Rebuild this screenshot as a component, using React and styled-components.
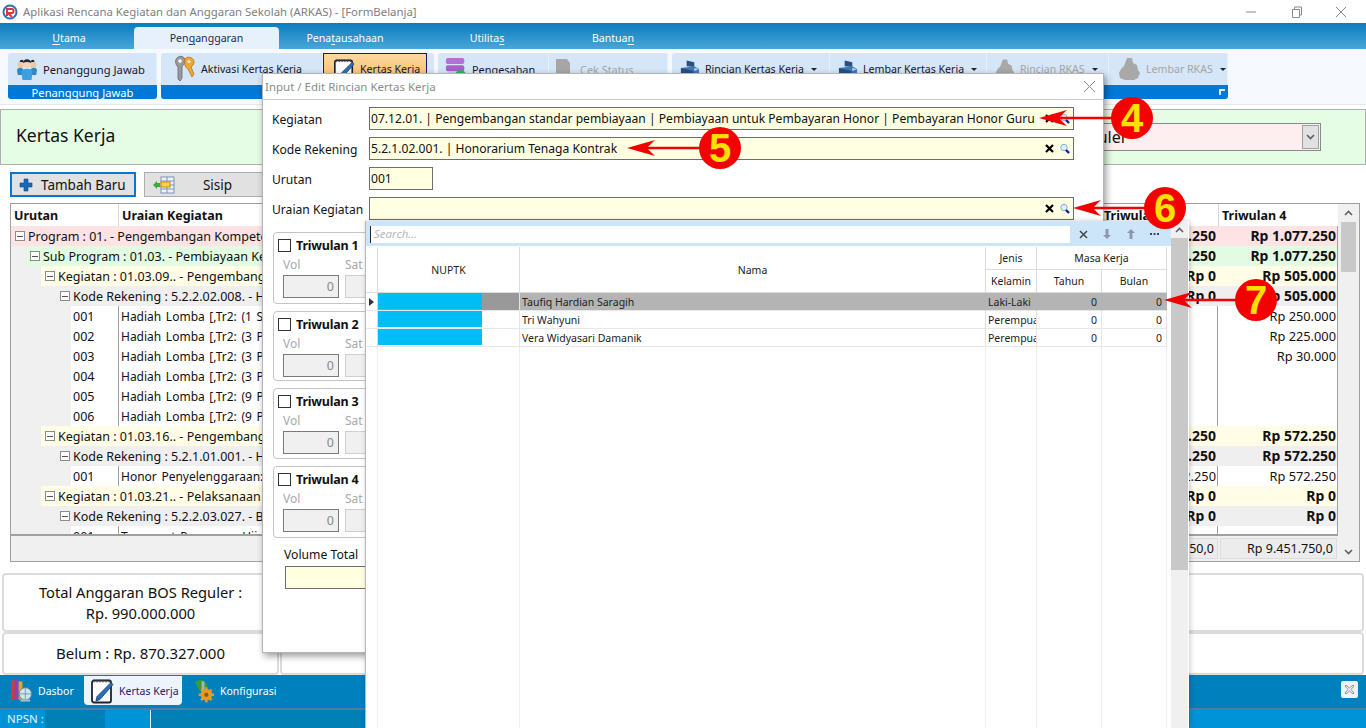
import React from 'react';
import styled, {createGlobalStyle} from "styled-components";

const UI_FONT = `"Noto Sans", "Open Sans", sans-serif`;

const Global = createGlobalStyle`
  html, body {
    margin: 0;
    padding: 0;
    background: #fff;
  }
  * {
    box-sizing: border-box;
  }
`

const Page = styled.div`
  position: relative;
  width: 1366px;
  height: 728px;
  overflow: hidden;
  display: flex;
  flex-direction: column;
  background: #fff;
  font-family: ${UI_FONT};
  font-size: 12.5px;
  color: #111;
`

/* title bar */
const TitleBar = styled.div`
  height: 23px;
  flex: none;
  display: flex;
  align-items: center;
  padding-left: 2px;
  gap: 5px;
  color: #808080;
  font-size: 11.4px;
`
const TitleText = styled.span`
  flex: 1;
`
const WinControls = styled.div`
  display: flex;
  align-items: center;
  gap: 31px;
  padding-right: 18px;
`

/* ribbon */
const TabStrip = styled.div`
  height: 26px;
  flex: none;
  display: flex;
  align-items: flex-end;
  background: linear-gradient(#0a7dbd, #4aa6d8);
  color: #fff;
  font-size: 10.6px;
`
const RibbonTab = styled.div`
  width: ${({$w}) => $w}px;
  height: 22px;
  display: flex;
  align-items: center;
  justify-content: center;
  padding-left: ${({$pl}) => $pl || 0}px;
  border-radius: 4px 4px 0 0;
  background: ${({$active}) => $active ? '#e7f1fb' : 'transparent'};
  color: ${({$active}) => $active ? '#1b2a5a' : '#fff'};
  u {
    text-underline-offset: 2px;
  }
`
const RibbonBody = styled.div`
  height: 56px;
  flex: none;
  display: flex;
  gap: 4px;
  padding: 4px 0 5px 8px;
  background: #f6fafe;
  border-bottom: 1px solid #e8e8e8;
`
const RibbonGroup = styled.div`
  width: ${({$w}) => $w}px;
  display: flex;
  flex-direction: column;
  background: #d6e6f9;
  border-radius: 3px;
  overflow: hidden;
`
const GroupItems = styled.div`
  flex: 1;
  display: flex;
  align-items: center;
`
const GroupLabel = styled.div`
  height: 14px;
  flex: none;
  display: flex;
  align-items: center;
  justify-content: center;
  position: relative;
  background: #0078d7;
  color: #fff;
  font-size: 11.2px;
`
const Launcher = styled.span`
  position: absolute;
  right: 3px;
  top: 4px;
  width: 6px;
  height: 6px;
  border-left: 2px solid #dbe9f7;
  border-top: 2px solid #dbe9f7;
`
const RibbonItem = styled.div`
  width: ${({$w}) => $w}px;
  height: 100%;
  flex: none;
  display: flex;
  align-items: center;
  gap: 5px;
  padding-left: ${({$pad}) => $pad}px;
  font-size: ${({$fs}) => $fs || 10.6}px;
  white-space: nowrap;
  color: ${({$off}) => $off ? '#a5a5a5' : '#15152c'};
  background: ${({$active}) => $active ? 'linear-gradient(#fcd9a0, #f9b860)' : 'transparent'};
  border: ${({$active}) => $active ? '1px solid #101e66' : 'none'};
  border-right: ${({$active}) => $active ? '1px solid #101e66' : '1px solid #e6f0fb'};
  svg {
    flex: none;
  }
`
const Caret = styled.span`
  width: 0;
  height: 0;
  margin-left: 2px;
  border-left: 3px solid transparent;
  border-right: 3px solid transparent;
  border-top: 3px solid #222;
`

/* page heading */
const HeadPanel = styled.div`
  height: 56px;
  flex: none;
  margin-top: 4px;
  display: flex;
  align-items: center;
  justify-content: space-between;
  padding: 0 44px 0 15px;
  background: #e4fde4;
  border: 1px solid #b0b0b0;
`
const HeadTitle = styled.div`
  margin-bottom: 4px;
  font-size: 17.5px;
`
const SelectBox = styled.div`
  width: 400px;
  height: 28px;
  display: flex;
  align-items: center;
  justify-content: space-between;
  padding: 0 1px 0 111px;
  background: #fdefef;
  border: 1px solid #8a8a8a;
  font-size: 16px;
`
const SelectArrow = styled.div`
  width: 17px;
  height: 24px;
  display: flex;
  align-items: center;
  justify-content: center;
  background: #e1e1e1;
  border: 1px solid #a0a0a0;
`

/* toolbar */
const ToolRow = styled.div`
  height: 25px;
  flex: none;
  margin-top: 7px;
  padding-left: 10px;
  display: flex;
  gap: 8px;
`
const ToolButton = styled.div`
  width: ${({$w}) => $w}px;
  display: flex;
  align-items: center;
  gap: ${({$primary}) => $primary ? 8 : 12}px;
  padding-left: 7px;
  background: #e1e1e1;
  border: ${({$primary}) => $primary ? '2px solid #0078d7' : '1px solid #adadad'};
  font-size: 13.5px;
`
const ToolLabel = styled.span`
  flex: 1;
  text-align: ${({$center}) => $center ? 'center' : 'left'};
  padding-right: ${({$center}) => $center ? '42px' : '0'};
`

/* tree grid */
const GridWrap = styled.div`
  height: 359px;
  flex: none;
  margin: 6px 6px 0 10px;
  display: flex;
  border: 1px solid #a0a0a0;
  background: #f0f0f0;
`
const GridMain = styled.div`
  width: 1327px;
  display: flex;
  flex-direction: column;
`
const GridHead = styled.div`
  height: 22px;
  flex: none;
  display: flex;
  background: #fff;
  font-weight: 700;
`
const HeadCell = styled.div`
  width: ${({$w}) => $w ? `${$w}px` : 'auto'};
  flex: ${({$w}) => $w ? 'none' : 1};
  padding-left: 3px;
  line-height: 23px;
  border-left: ${({$first}) => $first ? 'none' : '1px solid #d8d8d8'};
`
const GridBody = styled.div`
  flex: 1;
  overflow: hidden;
  border-right: 1px solid #a0a0a0;
`
const Row = styled.div`
  height: 20px;
  display: flex;
  align-items: center;
  margin-left: ${({$level}) => $level * 15}px;
  background: ${({$bg}) => $bg};
  font-weight: 400;
  white-space: nowrap;
`
const GroupTitle = styled.div`
  flex: 1;
  display: flex;
  align-items: center;
  gap: 3px;
  padding-left: 4px;
`
const Toggle = styled.span`
  width: 10px;
  height: 10px;
  flex: none;
  display: flex;
  align-items: center;
  justify-content: center;
  border: 1px solid #8c8c8c;
  background: #fff;
  &:after {
    content: "";
    width: 6px;
    height: 1px;
    background: #555;
  }
`
const DataNo = styled.div`
  width: 47px;
  padding-left: 2px;
  line-height: 21px;
`
const DataText = styled.div`
  flex: 1;
  height: 100%;
  line-height: 21px;
  padding-left: 2px;
  font-size: 12px;
  word-spacing: 1.5px;
  border-left: 1px solid #a0a0a0;
`
const Money = styled.div`
  width: ${({$w}) => $w}px;
  height: 100%;
  line-height: 20px;
  padding-right: 1px;
  text-align: right;
  font-size: ${({$bold}) => $bold ? 14 : 12.8}px;
  font-weight: ${({$bold}) => $bold ? 700 : 400};
  border-left: ${({$line}) => $line ? '1px solid #a0a0a0' : 'none'};
`
const GridFoot = styled.div`
  height: 27px;
  flex: none;
  display: flex;
  justify-content: flex-end;
  gap: 2px;
  padding: 2px 1px 2px 0;
  background: #f0f0f0;
  border-top: 2px solid #a0a0a0;
`
const FootCell = styled.div`
  width: ${({$w}) => $w}px;
  padding-right: 3px;
  text-align: right;
  line-height: 20px;
  background: #ececec;
  border: 1px solid #dcdcdc;
`
const ScrollTrack = styled.div`
  width: ${({$w}) => $w}px;
  flex: none;
  display: flex;
  flex-direction: column;
  align-items: center;
  background: #f0f0f0;
`
const ScrollArrow = styled.div`
  height: ${({$h}) => $h}px;
  flex: none;
  display: flex;
  align-items: center;
  justify-content: center;
`
const ScrollThumb = styled.div`
  width: ${({$w}) => $w}px;
  height: ${({$h}) => $h}px;
  flex: none;
  background: #c8c8c8;
`
const ScrollRest = styled.div`
  flex: 1;
`

/* totals */
const Summary = styled.div`
  height: 102px;
  flex: none;
  margin-top: 11px;
  display: grid;
  grid-template-columns: 277px 1fr;
  padding: 0 2px;
  gap: 1px;
`
const SummaryCol = styled.div`
  display: grid;
  grid-template-rows: 59px 1fr;
`
const SummaryBox = styled.div`
  display: flex;
  align-items: center;
  justify-content: center;
  text-align: center;
  border: 2px solid #dcdcdc;
  border-radius: 4px;
  font-size: 15px;
  line-height: 21px;
`
const TotalLine = styled.span`
  font-size: 14.7px;
`

/* bottom */
const BottomBar = styled.div`
  height: 33px;
  flex: none;
  display: flex;
  align-items: flex-start;
  padding: 1px 8px 0 6px;
  background: #0080bd;
  color: #fff;
  font-size: 10.5px;
`
const BottomTab = styled.div`
  height: 29px;
  width: ${({$w}) => $w}px;
  display: flex;
  align-items: center;
  gap: 5px;
  padding-left: ${({$pad}) => $pad}px;
  white-space: nowrap;
  border-radius: 0 0 4px 4px;
  background: ${({$active}) => $active ? '#eef4fb' : 'transparent'};
  color: ${({$active}) => $active ? '#2a1a6a' : '#fff'};
  svg {
    flex: none;
  }
`
const BottomClose = styled.div`
  margin: 5px 0 0 auto;
  width: 17px;
  height: 17px;
  display: flex;
  align-items: center;
  justify-content: center;
  background: #eef4f8;
  border-radius: 2px;
`
const StatusBar = styled.div`
  height: 20px;
  flex: none;
  display: flex;
  border-top: 2px solid #4f7f9a;
  color: #e8f4fb;
  font-size: 11.5px;
  line-height: 17px;
  white-space: nowrap;
`
const StatusCell = styled.div`
  width: ${({$w}) => $w ? `${$w}px` : 'auto'};
  flex: ${({$w}) => $w ? 'none' : 1};
  padding-left: ${({$pad}) => $pad || 0}px;
  background: ${({$bg}) => $bg};
  border-right: ${({$line}) => $line ? '1px solid #e0f0fa' : 'none'};
`

/* modal */
const Modal = styled.div`
  position: absolute;
  left: 262px;
  top: 73px;
  width: 842px;
  height: 580px;
  display: flex;
  flex-direction: column;
  background: #fff;
  border: 1px solid #b4b4b4;
  box-shadow: 2px 3px 7px rgba(0, 0, 0, .4);
`
const ModalTitle = styled.div`
  height: 26px;
  flex: none;
  display: flex;
  align-items: center;
  justify-content: space-between;
  padding: 0 7px 0 2px;
  border-bottom: 1px solid #c8c8c8;
  color: #8c8c8c;
  font-size: 11.5px;
`
const ModalBody = styled.div`
  flex: 1;
  display: flex;
  flex-direction: column;
  padding: 7px 29px 0 9px;
  font-size: 12.1px;
`
const FieldStack = styled.div`
  display: flex;
  flex-direction: column;
  gap: 7px;
`
const Field = styled.div`
  height: 23px;
  display: flex;
  align-items: center;
`
const FieldLabel = styled.div`
  width: 97px;
  flex: none;
  padding-top: 1px;
`
const FieldInput = styled.div`
  width: ${({$w}) => $w ? `${$w}px` : 'auto'};
  flex: ${({$w}) => $w ? 'none' : 1};
  height: 23px;
  display: flex;
  align-items: center;
  gap: 6px;
  padding: 0 3px 0 1px;
  background: #ffffe1;
  border: 1px solid #6e6e6e;
  white-space: nowrap;
`
const InputValue = styled.span`
  flex: 1;
`
const TriwulanStack = styled.div`
  margin-top: 12px;
  display: flex;
  flex-direction: column;
  gap: 7px;
`
const TriwulanBox = styled.div`
  height: ${({$h}) => $h}px;
  margin-left: 1px;
  padding: 5px 9px;
  border: 1px solid #c4c4c4;
  border-radius: 4px;
`
const TriwulanHead = styled.div`
  height: 15px;
  margin-left: -5px;
  display: flex;
  align-items: center;
  gap: 5px;
  font-weight: 700;
  font-size: 12.5px;
  letter-spacing: -.2px;
  white-space: nowrap;
`
const CheckMark = styled.span`
  width: 13px;
  height: 13px;
  flex: none;
  border: 1px solid #333;
  background: #fff;
`
const QtyRow = styled.div`
  margin-top: 4px;
  display: flex;
  gap: 6px;
`
const QtyCol = styled.div`
  display: flex;
  flex-direction: column;
  color: #a8a8a8;
  font-size: 12px;
  line-height: 15px;
`
const QtyInput = styled.div`
  width: ${({$w}) => $w}px;
  height: 23px;
  margin-top: 3px;
  padding-right: 4px;
  text-align: right;
  line-height: 21px;
  color: #888;
  background: #f0f0f0;
  border: 1px solid ${({$soft}) => $soft ? '#cfcfcf' : '#7a7a7a'};
  font-size: 12.5px;
`
const TotalLabel = styled.div`
  margin: 8px 0 0 12px;
  line-height: 17px;
  font-size: 12.2px;
`
const TotalInput = styled.div`
  width: 200px;
  height: 23px;
  margin: 3px 0 0 13px;
  background: #ffffe1;
  border: 1px solid #6e6e6e;
`

/* lookup popup */
const Popup = styled.div`
  position: absolute;
  left: 365px;
  top: 221px;
  width: 824px;
  height: 507px;
  display: flex;
  background: #fff;
  border-left: 1px solid #b8b8b8;
  box-shadow: 1px 0 5px rgba(0, 0, 0, .22);
`
const PopupLeft = styled.div`
  width: 805px;
  flex: none;
  display: flex;
  flex-direction: column;
`
const PopupTools = styled.div`
  height: 25px;
  flex: none;
  display: flex;
  align-items: center;
  padding: 1px 0 0 4px;
  background: #cde5f8;
`
const SearchInput = styled.div`
  width: 700px;
  height: 17px;
  margin-right: 2px;
  padding-left: 3px;
  border-left: 1px solid #222;
  background: #fff;
  color: #b8b8b8;
  font-style: italic;
  font-size: 11.5px;
  line-height: 16px;
`
const PopupTool = styled.div`
  width: 23.5px;
  display: flex;
  justify-content: center;
  align-items: center;
`
const DataGrid = styled.div`
  width: 801px;
  flex: 1;
  padding-top: 1px;
  display: grid;
  grid-template-columns: 12px 142px 466px 51px 65px 65px;
  grid-template-rows: 23px 23px 18px 18px 18px 1fr;
  font-size: 10.5px;
  color: #222;
`
const DgHead = styled.div`
  display: flex;
  align-items: center;
  justify-content: center;
  grid-column: ${({$col}) => $col || 'auto'};
  grid-row: ${({$row}) => $row || 'auto'};
  border-right: 1px solid #dcdcdc;
  border-bottom: 1px solid #dcdcdc;
`
const DgCell = styled.div`
  display: flex;
  align-items: center;
  justify-content: ${({$right}) => $right ? 'flex-end' : 'flex-start'};
  padding: 0 ${({$right}) => $right ? 4 : 2}px;
  background: ${({$sel}) => $sel ? '#b4b4b4' : '#fff'};
  border-right: 1px solid ${({$sel}) => $sel ? '#b4b4b4' : '#e4e4e4'};
  border-bottom: 1px solid #e8e8e8;
  overflow: hidden;
  white-space: nowrap;
`
const Indicator = styled.div`
  display: flex;
  align-items: center;
  justify-content: center;
  border-right: 1px solid #dcdcdc;
  border-bottom: 1px solid #e8e8e8;
  &:after {
    content: "";
    display: ${({$on}) => $on ? 'block' : 'none'};
    border-left: 5px solid #333;
    border-top: 4px solid transparent;
    border-bottom: 4px solid transparent;
  }
`
const NuptkCell = styled.div`
  display: flex;
  padding-bottom: 1px;
  background: ${({$sel}) => $sel ? '#999' : '#fff'};
  border-right: 1px solid #e4e4e4;
  border-bottom: 1px solid #e8e8e8;
`
const Masked = styled.div`
  width: 104px;
  background: #00bdf6;
`
const FillCell = styled.div`
  border-right: 1px solid #eeeeee;
`

/* numbered red callouts laid over the screenshot */
const Badge = styled.div`
  position: absolute;
  left: ${({$x}) => $x - 21}px;
  top: ${({$y}) => $y - 21}px;
  width: 42px;
  height: 42px;
  display: flex;
  align-items: center;
  justify-content: center;
  border-radius: 50%;
  background: #f40000;
  color: #ffe100;
  font-family: "Liberation Sans", sans-serif;
  font-weight: 700;
  font-size: 40px;
  line-height: 42px;
`
const ArrowSvg = styled.svg`
  position: absolute;
  left: ${({$x}) => $x}px;
  top: ${({$y}) => $y - 14}px;
`

const PeopleIcon = () => (
  <svg width="22" height="24" viewBox="0 0 24 24" preserveAspectRatio="none">
    <circle cx="5" cy="8" r="3.4" fill="#e8c9a8"/>
    <circle cx="19" cy="8" r="3.4" fill="#e8c9a8"/>
    <path d="M1 13c1-3 6-3 7 0l1 5H2z" fill="#2f86c8"/>
    <path d="M16 13c1-3 6-3 7 0l-1 5h-7z" fill="#2f86c8"/>
    <circle cx="12" cy="7" r="4" fill="#f0d5b8"/>
    <path d="M7.5 6c0-5 9-5 9 0-3-1.500-6-1.500-9 0z" fill="#26262e"/>
    <path d="M4 5c0-3 5-3 4 0zM16 5c0-3 5-3 4 0z" fill="#26262e"/>
    <path d="M6 14c2-3 10-3 12 0l-1 9H7z" fill="#3d9ee0"/>
  </svg>
)
const KeysIcon = () => (
  <svg width="22" height="28" viewBox="0 0 22 28">
    <path d="M3 3c3-3 8-2 8 3 0 2-1 4-3 5v12l-2 3-2-2v-12C1 9 1 5 3 3z" fill="#9a9a9a" stroke="#666" strokeWidth=".8"/>
    <circle cx="6" cy="6" r="1.800" fill="#fff"/>
    <path d="M12 3c3-2 8 0 8 4 0 3-2 4-3 5l3 7-2 3-4-8c-3-1-5-8-2-11z" fill="#f2a531" stroke="#b5740e" strokeWidth=".8"/>
    <circle cx="15" cy="6.500" r="1.500" fill="#fff3d8"/>
  </svg>
)
const NotebookIcon = ({size = 22}) => (
  <svg width={size} height={size + 3} viewBox="0 0 24 26">
    <rect x="2" y="3" width="19" height="22" rx="2" fill="#fdfdfd" stroke="#1c2230" strokeWidth="1.800"/>
    <path d="M4 2v3M7 2v3M10 2v3M13 2v3M16 2v3M19 2v3" stroke="#444" strokeWidth="1"/>
    <path d="M21 5l2 2-13 15-4 1.500L7 19z" fill="#2b6fb8" stroke="#123a6a" strokeWidth=".8"/>
  </svg>
)
const StackIcon = () => (
  <svg width="22" height="26" viewBox="0 0 24 26">
    <rect x="1" y="1" width="20" height="6.500" rx="2" fill="#b76fd6"/>
    <rect x="1" y="9" width="20" height="6.500" rx="2" fill="#a860cc"/>
    <rect x="1" y="17" width="20" height="6.500" rx="2" fill="#b76fd6"/>
    <circle cx="17" cy="20" r="6" fill="#2eb84a"/>
  </svg>
)
const DocOffIcon = () => (
  <svg width="20" height="24" viewBox="0 0 20 24">
    <path d="M1 2h11l3 4v11h4v5H1z" fill="#a6a6a6"/>
  </svg>
)
const PrinterIcon = () => (
  <svg width="20" height="20" viewBox="0 0 21 20">
    <path d="M7 1l8 2v5l-8-1z" fill="#2c4f7f"/>
    <path d="M1 9l14-2 5 3v6l-6 3-13-2z" fill="#3d78b8"/>
    <path d="M1 9l13 3v7l-13-3z" fill="#24507f"/>
    <path d="M15 9l5 1-5 2z" fill="#bcd6ee"/>
  </svg>
)
const BlobOffIcon = () => (
  <svg width="20" height="24" viewBox="0 0 23 24">
    <path d="M9 1h5l1 5 4 2 1 5 2 3-2 5-4 2H7l-5-2-1-5 2-4 3-3z" fill="#a8a8a8"/>
  </svg>
)
const BigBlobOffIcon = () => (
  <svg width="23" height="24" viewBox="0 0 23 24">
    <path d="M9 1h5l1 5 4 2 1 5 2 3-2 5-4 2H7l-5-2-1-5 2-4 3-3z" fill="#a8a8a8"/>
  </svg>
)
const BooksIcon = () => (
  <svg width="23" height="25" viewBox="0 0 24 25">
    <rect x="1" y="2" width="4" height="20" fill="#d8373f"/>
    <rect x="5" y="1" width="4" height="21" fill="#8a3fc0"/>
    <rect x="9" y="3" width="4" height="19" fill="#e9a420"/>
    <circle cx="16" cy="16" r="6.500" fill="#cfe4ee" stroke="#5b7f92"/>
    <path d="M10 16h12M16 10v12" stroke="#5b7f92" strokeWidth=".7"/>
    <rect x="11" y="22" width="10" height="2" fill="#a9c2ce"/>
  </svg>
)
const ConfigIcon = () => (
  <svg width="23" height="25" viewBox="0 0 24 25">
    <path d="M3 3l7-2 6 5-1 6-8 0z" fill="#3c9a3c"/>
    <rect x="10" y="3" width="3" height="14" fill="#b0b0b0"/>
    <circle cx="15" cy="17" r="6" fill="#e59a22"/>
    <path d="M15 9v16M7 17h16M9.500 11.500l11 11M20.500 11.500l-11 11" stroke="#e59a22" strokeWidth="2.500"/>
    <circle cx="15" cy="17" r="2.200" fill="#8a5a10"/>
  </svg>
)
const AppLogo = () => (
  <svg width="16" height="16" viewBox="0 0 16 16">
    <circle cx="8" cy="8" r="6.500" fill="none" stroke="#2f6fb5" strokeWidth="2"/>
    <path d="M5 12V5h5c2 0 2 4 0 4H6l4 4" fill="none" stroke="#d83a3a" strokeWidth="2"/>
  </svg>
)
const PlusIcon = () => (
  <svg width="14" height="14" viewBox="0 0 14 14">
    <path d="M5 1h4v4h4v4H9v4H5V9H1V5h4z" fill="#1668b8" stroke="#0d4a8a" strokeWidth=".6"/>
  </svg>
)
const InsertIcon = () => (
  <svg width="24" height="18" viewBox="0 0 24 18">
    <path d="M1 9l4-4v2h3v4H5v2z" fill="#33b233"/>
    <rect x="9" y="1" width="13" height="16" fill="#eef2f8" stroke="#7a94b8"/>
    <path d="M9 5h13M9 9h13M9 13h13M15 1v16" stroke="#7a94b8"/>
    <rect x="9" y="6" width="9" height="5" fill="#f7d34a" stroke="#c98a1a"/>
  </svg>
)
const ClearIcon = () => (
  <svg width="9" height="9" viewBox="0 0 9 9">
    <path d="M1 1l7 7M8 1L1 8" stroke="#000" strokeWidth="2.200"/>
  </svg>
)
const LookupIcon = () => (
  <svg width="10" height="12" viewBox="0 0 10 12">
    <circle cx="4" cy="4.500" r="3.200" fill="#dff0fb" stroke="#7fb0d8"/>
    <path d="M6 7l3 3" stroke="#101f9a" strokeWidth="2.400"/>
  </svg>
)
const Chevron = ({up}) => (
  <svg width="9" height="6" viewBox="0 0 9 6">
    <path d={up ? "M1 5l3.500-3.500L8 5" : "M1 1l3.500 3.500L8 1"} fill="none" stroke="#606060" strokeWidth="1.600"/>
  </svg>
)
const SmallArrow = ({up}) => (
  <svg width="8" height="10" viewBox="0 0 8 10">
    <path d={up ? "M4 0l4 4H5.500v6h-3V4H0z" : "M4 10l4-4H5.500V0h-3v6H0z"} fill="#8a9bb0"/>
  </svg>
)

const Callout = ({n, x, y, tip}) => {
  const len = x - tip;
  return (
    <>
      <ArrowSvg $x={tip} $y={y} width={len} height="28" viewBox={`0 0 ${len} 28`}>
        <path d={`M0 14L28 6 21 12.700H${len}V15.300H21L28 22z`} fill="#f00000"/>
      </ArrowSvg>
      <Badge $x={x} $y={y}>{n}</Badge>
    </>
  )
}

const TABS = [
  {w: 134, pl: 4, pre: '', u: 'U', post: 'tama'},
  {w: 145, pre: 'Pen', u: 'g', post: 'anggaran', active: true},
  {w: 132, pre: 'Pena', u: 't', post: 'ausahaan'},
  {w: 152, pre: 'Utilita', u: 's', post: ''},
  {w: 100, pre: 'Bantua', u: 'n', post: ''},
]

const RIBBON = [
  {w: 149, label: 'Penanggung Jawab', items: [{w: 149, pad: 8, fs: 11.2, text: 'Penanggung Jawab', Icon: PeopleIcon}]},
  {w: 273, label: '', items: [
    {w: 162, pad: 13, text: 'Aktivasi Kertas Kerja', Icon: KeysIcon},
    {w: 104, pad: 9, text: 'Kertas Kerja', Icon: NotebookIcon, active: true},
  ]},
  {w: 230, label: '', items: [
    {w: 111, pad: 7, fs: 10.9, text: 'Pengesahan', Icon: StackIcon},
    {w: 119, pad: 6, fs: 10.9, text: 'Cek Status', Icon: DocOffIcon, off: true},
  ]},
  {w: 556, label: '', launcher: true, items: [
    {w: 158, pad: 8, text: 'Rincian Kertas Kerja', Icon: PrinterIcon, caret: true},
    {w: 157, pad: 8, text: 'Lembar Kertas Kerja', Icon: PrinterIcon, caret: true},
    {w: 122, pad: 8, text: 'Rincian RKAS', Icon: BlobOffIcon, off: true, caret: true},
    {w: 119, pad: 9, text: 'Lembar RKAS', Icon: BigBlobOffIcon, off: true, caret: true},
  ]},
]

const PINK = '#fde3e3', GREEN = '#e3fbe3', CREAM = '#fffde6', GREY = '#efefef';

const TREE = [
  {level: 0, bg: PINK, text: 'Program : 01. - Pengembangan Kompetensi Lulusan', t3: 'Rp 1.077.250', t4: 'Rp 1.077.250'},
  {level: 1, bg: GREEN, text: 'Sub Program : 01.03. - Pembiayaan Kegiatan', t3: 'Rp 1.077.250', t4: 'Rp 1.077.250'},
  {level: 2, bg: CREAM, text: 'Kegiatan : 01.03.09.. - Pengembangan Pendidikan', t3: 'Rp 0', t4: 'Rp 505.000'},
  {level: 3, bg: GREY, text: 'Kode Rekening : 5.2.2.02.008. - Hadiah', t3: 'Rp 0', t4: 'Rp 505.000'},
  {no: '001', text: 'Hadiah Lomba [,Tr2: (1 Set', t4: 'Rp 250.000'},
  {no: '002', text: 'Hadiah Lomba [,Tr2: (3 Paket', t4: 'Rp 225.000'},
  {no: '003', text: 'Hadiah Lomba [,Tr2: (3 Paket', t4: 'Rp 30.000'},
  {no: '004', text: 'Hadiah Lomba [,Tr2: (3 Paket'},
  {no: '005', text: 'Hadiah Lomba [,Tr2: (9 Paket'},
  {no: '006', text: 'Hadiah Lomba [,Tr2: (9 Paket'},
  {level: 2, bg: CREAM, text: 'Kegiatan : 01.03.16.. - Pengembangan Sekolah', t3: 'Rp 572.250', t4: 'Rp 572.250'},
  {level: 3, bg: GREY, text: 'Kode Rekening : 5.2.1.01.001. - Honor', t3: 'Rp 572.250', t4: 'Rp 572.250'},
  {no: '001', text: 'Honor Penyelenggaraan: Kegiatan', t3: 'Rp 572.250', t4: 'Rp 572.250'},
  {level: 2, bg: CREAM, text: 'Kegiatan : 01.03.21.. - Pelaksanaan Ujian', t3: 'Rp 0', t4: 'Rp 0'},
  {level: 3, bg: GREY, text: 'Kode Rekening : 5.2.2.03.027. - Belanja', t3: 'Rp 0', t4: 'Rp 0'},
  {no: '001', text: 'Transport Pengawas Ujian'},
]

const TRIWULAN = [
  {label: 'Triwulan 1', h: 72},
  {label: 'Triwulan 2', h: 70},
  {label: 'Triwulan 3', h: 71},
  {label: 'Triwulan 4', h: 72},
]

const GURU = [
  {nama: 'Taufiq Hardian Saragih', jk: 'Laki-Laki', sel: true},
  {nama: 'Tri Wahyuni', jk: 'Perempuan'},
  {nama: 'Vera Widyasari Damanik', jk: 'Perempuan'},
]

const TreeRow = ({row}) => {
  if (row.no) {
    return (
      <Row $level={4} $bg="#fff">
        <DataNo>{row.no}</DataNo>
        <DataText>{row.text}</DataText>
        <Money $w={118} $line>{row.t3}</Money>
        <Money $w={120} $line>{row.t4}</Money>
      </Row>
    )
  }
  return (
    <Row $level={row.level} $bg={row.bg}>
      <GroupTitle>
        <Toggle/>
        {row.text}
      </GroupTitle>
      <Money $w={118} $bold>{row.t3}</Money>
      <Money $w={120} $bold>{row.t4}</Money>
    </Row>
  )
}

const App = () => {
  return (
    <Page>
      <Global/>
      <TitleBar>
        <AppLogo/>
        <TitleText>Aplikasi Rencana Kegiatan dan Anggaran Sekolah (ARKAS) - [FormBelanja]</TitleText>
        <WinControls>
          <svg width="14" height="12" viewBox="0 0 14 12"><path d="M2 6h10" stroke="#888"/></svg>
          <svg width="14" height="12" viewBox="0 0 14 12"><path d="M3.500 3.500h7v8h-7zM5.500 3.500v-2.500h7v8h-2" fill="none" stroke="#888"/></svg>
          <svg width="14" height="14" viewBox="0 0 14 14"><path d="M2 2l10 10M12 2L2 12" stroke="#888"/></svg>
        </WinControls>
      </TitleBar>

      <TabStrip>
        {TABS.map((t) => (
          <RibbonTab key={t.pre + t.u} $w={t.w} $pl={t.pl} $active={t.active}>{t.pre}<u>{t.u}</u>{t.post}</RibbonTab>
        ))}
      </TabStrip>
      <RibbonBody>
        {RIBBON.map((g, i) => (
          <RibbonGroup key={i} $w={g.w}>
            <GroupItems>
              {g.items.map((it) => (
                <RibbonItem key={it.text} $w={it.w} $pad={it.pad} $fs={it.fs} $off={it.off} $active={it.active}>
                  <it.Icon/>
                  {it.text}
                  {it.caret && <Caret/>}
                </RibbonItem>
              ))}
            </GroupItems>
            <GroupLabel>
              {g.label}
              {g.launcher && <Launcher/>}
            </GroupLabel>
          </RibbonGroup>
        ))}
      </RibbonBody>

      <HeadPanel>
        <HeadTitle>Kertas Kerja</HeadTitle>
        <SelectBox>
          BOS Reguler
          <SelectArrow><Chevron/></SelectArrow>
        </SelectBox>
      </HeadPanel>

      <ToolRow>
        <ToolButton $w={126} $primary>
          <PlusIcon/>
          <ToolLabel>Tambah Baru</ToolLabel>
        </ToolButton>
        <ToolButton $w={146}>
          <InsertIcon/>
          <ToolLabel $center>Sisip</ToolLabel>
        </ToolButton>
      </ToolRow>

      <GridWrap>
        <GridMain>
          <GridHead>
            <HeadCell $w={107} $first>Urutan</HeadCell>
            <HeadCell>Uraian Kegiatan</HeadCell>
            <HeadCell $w={118}>Triwulan 3</HeadCell>
            <HeadCell $w={120}>Triwulan 4</HeadCell>
          </GridHead>
          <GridBody>
            {TREE.map((row, i) => <TreeRow key={i} row={row}/>)}
          </GridBody>
          <GridFoot>
            <FootCell $w={118}>Rp 9.451.750,0</FootCell>
            <FootCell $w={117}>Rp 9.451.750,0</FootCell>
          </GridFoot>
        </GridMain>
        <ScrollTrack $w={20}>
          <ScrollArrow $h={18}><Chevron up/></ScrollArrow>
          <ScrollThumb $w={15} $h={50}/>
          <ScrollRest/>
          <ScrollArrow $h={18}><Chevron/></ScrollArrow>
        </ScrollTrack>
      </GridWrap>

      <Summary>
        <SummaryCol>
          <SummaryBox><TotalLine>Total Anggaran BOS Reguler :<br/>Rp. 990.000.000</TotalLine></SummaryBox>
          <SummaryBox>Belum : Rp. 870.327.000</SummaryBox>
        </SummaryCol>
        <SummaryCol>
          <SummaryBox/>
          <SummaryBox/>
        </SummaryCol>
      </Summary>

      <BottomBar>
        <BottomTab $w={78} $pad={4}><BooksIcon/>Dasbor</BottomTab>
        <BottomTab $w={98} $pad={6} $active><NotebookIcon size={24}/>Kertas Kerja</BottomTab>
        <BottomTab $w={100} $pad={10}><ConfigIcon/>Konfigurasi</BottomTab>
        <BottomClose>
          <svg width="11" height="11" viewBox="0 0 11 11"><path d="M2 1l3.500 3L9 1l1 1-3 3.500 3 3.500-1 1-3.500-3L2 10 1 9l3-3.500L1 2z" fill="none" stroke="#777" strokeWidth=".8"/></svg>
        </BottomClose>
      </BottomBar>
      <StatusBar>
        <StatusCell $w={45} $pad={7} $bg="#0093d8">NPSN :</StatusCell>
        <StatusCell $w={60} $bg="#0080b5"/>
        <StatusCell $w={46} $bg="#0093d8" $line/>
        <StatusCell $w={1038} $bg="#0080b5"/>
        <StatusCell $bg="#0093d8"/>
      </StatusBar>

      <Modal>
        <ModalTitle>
          Input / Edit Rincian Kertas Kerja
          <svg width="13" height="13" viewBox="0 0 13 13"><path d="M1 1l11 11M12 1L1 12" stroke="#888"/></svg>
        </ModalTitle>
        <ModalBody>
          <FieldStack>
            <Field>
              <FieldLabel>Kegiatan</FieldLabel>
              <FieldInput>
                <InputValue>07.12.01. | Pengembangan standar pembiayaan | Pembiayaan untuk Pembayaran Honor | Pembayaran Honor Guru</InputValue>
                <ClearIcon/><LookupIcon/>
              </FieldInput>
            </Field>
            <Field>
              <FieldLabel>Kode Rekening</FieldLabel>
              <FieldInput>
                <InputValue>5.2.1.02.001. | Honorarium Tenaga Kontrak</InputValue>
                <ClearIcon/><LookupIcon/>
              </FieldInput>
            </Field>
            <Field>
              <FieldLabel>Urutan</FieldLabel>
              <FieldInput $w={64}>001</FieldInput>
            </Field>
            <Field>
              <FieldLabel>Uraian Kegiatan</FieldLabel>
              <FieldInput>
                <InputValue/>
                <ClearIcon/><LookupIcon/>
              </FieldInput>
            </Field>
          </FieldStack>
          <TriwulanStack>
            {TRIWULAN.map((t) => (
              <TriwulanBox key={t.label} $h={t.h}>
                <TriwulanHead><CheckMark/>{t.label}</TriwulanHead>
                <QtyRow>
                  <QtyCol>Vol<QtyInput $w={56}>0</QtyInput></QtyCol>
                  <QtyCol>Sat<QtyInput $w={60} $soft/></QtyCol>
                </QtyRow>
              </TriwulanBox>
            ))}
          </TriwulanStack>
          <TotalLabel>Volume Total</TotalLabel>
          <TotalInput/>
        </ModalBody>
      </Modal>

      <Popup>
        <PopupLeft>
          <PopupTools>
            <SearchInput>Search...</SearchInput>
            <PopupTool><svg width="9" height="9" viewBox="0 0 9 9"><path d="M1 1l7 7M8 1L1 8" stroke="#444" strokeWidth="1.500"/></svg></PopupTool>
            <PopupTool><SmallArrow/></PopupTool>
            <PopupTool><SmallArrow up/></PopupTool>
            <PopupTool><svg width="9" height="3" viewBox="0 0 9 3"><path d="M0 0h2v2H0zM3.500 0h2v2h-2zM7 0h2v2H7z" fill="#445"/></svg></PopupTool>
          </PopupTools>
          <DataGrid>
            <DgHead $row="1 / span 2"/>
            <DgHead $row="1 / span 2">NUPTK</DgHead>
            <DgHead $row="1 / span 2">Nama</DgHead>
            <DgHead>Jenis</DgHead>
            <DgHead $col="5 / span 2">Masa Kerja</DgHead>
            <DgHead $col="4">Kelamin</DgHead>
            <DgHead>Tahun</DgHead>
            <DgHead>Bulan</DgHead>
            {GURU.map((g) => (
              <React.Fragment key={g.nama}>
                <Indicator $on={g.sel}/>
                <NuptkCell $sel={g.sel}><Masked/></NuptkCell>
                <DgCell $sel={g.sel}>{g.nama}</DgCell>
                <DgCell $sel={g.sel}>{g.jk}</DgCell>
                <DgCell $sel={g.sel} $right>0</DgCell>
                <DgCell $sel={g.sel} $right>0</DgCell>
              </React.Fragment>
            ))}
            <FillCell/><FillCell/><FillCell/><FillCell/><FillCell/><FillCell/>
          </DataGrid>
        </PopupLeft>
        <ScrollTrack $w={17}>
          <ScrollArrow $h={17}><Chevron up/></ScrollArrow>
          <ScrollThumb $w={17} $h={332}/>
          <ScrollRest/>
        </ScrollTrack>
      </Popup>

      <Callout n="4" x={1132} y={118} tip={1039}/>
      <Callout n="5" x={720} y={148} tip={627}/>
      <Callout n="6" x={1165} y={208} tip={1073}/>
      <Callout n="7" x={1256} y={300} tip={1164}/>
    </Page>
  );
};

export default App;
